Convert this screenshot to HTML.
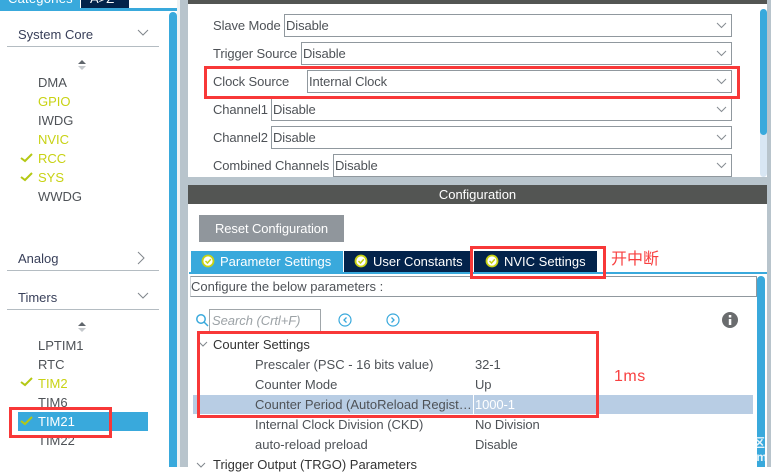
<!DOCTYPE html>
<html><head><meta charset="utf-8"><style>
html,body{margin:0;padding:0}
body{width:771px;height:467px;position:relative;overflow:hidden;background:#fff;font-family:"Liberation Sans","Noto Sans CJK SC",sans-serif;font-size:13px;color:#4e5257}
div{position:absolute;box-sizing:border-box}
.t{white-space:nowrap;line-height:16px;height:16px}
.g{color:#c8d214}
.sel{height:23px;border:1px solid #90989e;background:#fff;right:39px;padding-left:1px;line-height:21px;white-space:nowrap;letter-spacing:-.1px}
.lab{left:213px;letter-spacing:-.1px}
svg{position:absolute;overflow:visible}
.r{border:3px solid #f83838}
.p{left:255px}
.v{left:475px;letter-spacing:-.1px}
</style></head><body>
<!-- left -->
<div style="left:0;top:0;width:80px;height:8px;background:#39a9dc;overflow:hidden"><div class="t" style="left:8px;top:-9px;color:#fff;letter-spacing:.2px">Categories</div></div>
<div style="left:81px;top:0;width:48px;height:8px;background:#03234b;overflow:hidden"><div class="t" style="left:9px;top:-9px;color:#fff">A&gt;Z</div></div>
<div style="left:0;top:8px;width:179px;height:3px;background:#39a9dc"></div>
<div style="left:169px;top:12px;width:8px;height:455px;background:#39a9dc;border-radius:4px 4px 0 0"></div>
<div style="left:180px;top:0;width:8px;height:467px;background:#b8c4cc"></div>
<div style="left:177px;top:0;width:3px;height:467px;background:#f0f3f4"></div>
<div class="t" style="left:18px;top:27px;color:#39405a">System Core</div>
<div style="left:7px;top:46px;width:152px;height:1px;background:#b4bcc2"></div>
<svg style="left:137px;top:29px" width="14" height="9"><path d="M1 1L6 6L11 1" fill="none" stroke="#80868c"/></svg>
<svg style="left:78px;top:59px" width="9" height="12"><path d="M0 5L4 1L8 5Z" fill="#60666c"/><path d="M0 7H8L4 11Z" fill="#c4c8cc"/></svg>
<div class="t" style="left:38px;top:75px">DMA</div>
<div class="t g" style="left:38px;top:94px">GPIO</div>
<div class="t" style="left:38px;top:113px">IWDG</div>
<div class="t g" style="left:38px;top:132px">NVIC</div>
<div class="t g" style="left:38px;top:151px">RCC</div>
<div class="t g" style="left:38px;top:170px">SYS</div>
<div class="t" style="left:38px;top:189px">WWDG</div>
<svg style="left:20px;top:153px" width="13" height="10"><path d="M1 5L5 8L12 1" fill="none" stroke="#b4c814" stroke-width="2"/></svg>
<svg style="left:20px;top:172px" width="13" height="10"><path d="M1 5L5 8L12 1" fill="none" stroke="#b4c814" stroke-width="2"/></svg>
<div class="t" style="left:18px;top:251px;color:#39405a">Analog</div>
<svg style="left:137px;top:252px" width="9" height="13"><path d="M1 0L7 6L1 12" fill="none" stroke="#80868c"/></svg>
<div style="left:7px;top:270px;width:152px;height:1px;background:#b4bcc2"></div>
<div class="t" style="left:18px;top:290px;color:#39405a">Timers</div>
<svg style="left:137px;top:292px" width="14" height="9"><path d="M1 1L6 6L11 1" fill="none" stroke="#80868c"/></svg>
<div style="left:7px;top:309px;width:152px;height:1px;background:#b4bcc2"></div>
<svg style="left:78px;top:321px" width="9" height="12"><path d="M0 5L4 1L8 5Z" fill="#60666c"/><path d="M0 7H8L4 11Z" fill="#c4c8cc"/></svg>
<div class="t" style="left:38px;top:338px">LPTIM1</div>
<div class="t" style="left:38px;top:357px">RTC</div>
<div class="t g" style="left:38px;top:376px">TIM2</div>
<div class="t" style="left:38px;top:395px">TIM6</div>
<div class="t" style="left:38px;top:433px">TIM22</div>
<div style="left:18px;top:412px;width:130px;height:19px;background:#39a9dc"></div>
<div class="t" style="left:38px;top:414px;color:#fff">TIM21</div>
<svg style="left:20px;top:377px" width="13" height="10"><path d="M1 5L5 8L12 1" fill="none" stroke="#b4c814" stroke-width="2"/></svg>
<svg style="left:20px;top:416px" width="13" height="10"><path d="M1 5L5 8L12 1" fill="none" stroke="#b4c814" stroke-width="2"/></svg>
<div class="r" style="left:9px;top:407px;width:103px;height:31px"></div>
<!-- right top -->
<div style="left:188px;top:0;width:579px;height:4px;background:#535553"></div>
<div style="left:767px;top:0;width:4px;height:467px;background:#b8c4cc"></div>
<div style="left:188px;top:177px;width:579px;height:8px;background:#b8c4cc"></div>
<div style="left:760px;top:9px;width:7px;height:168px;background:#d8e6f3;border-radius:4px"></div>
<div style="left:760px;top:9px;width:7px;height:126px;background:#39a9dc;border-radius:4px"></div>
<div class="t lab" style="top:18px">Slave Mode</div><div class="sel" style="left:284px;top:14px">Disable</div>
<div class="t lab" style="top:46px">Trigger Source</div><div class="sel" style="left:301px;top:42px">Disable</div>
<div class="t lab" style="top:74px">Clock Source</div><div class="sel" style="left:307px;top:70px">Internal Clock</div>
<div class="t lab" style="top:102px">Channel1</div><div class="sel" style="left:271px;top:98px">Disable</div>
<div class="t lab" style="top:130px">Channel2</div><div class="sel" style="left:271px;top:126px">Disable</div>
<div class="t lab" style="top:158px">Combined Channels</div><div class="sel" style="left:333px;top:154px">Disable</div>
<svg style="left:716px;top:22px" width="12" height="8"><path d="M1 1L5.500 5.500L10 1" fill="none" stroke="#868c92"/></svg>
<svg style="left:716px;top:50px" width="12" height="8"><path d="M1 1L5.500 5.500L10 1" fill="none" stroke="#868c92"/></svg>
<svg style="left:716px;top:78px" width="12" height="8"><path d="M1 1L5.500 5.500L10 1" fill="none" stroke="#868c92"/></svg>
<svg style="left:716px;top:106px" width="12" height="8"><path d="M1 1L5.500 5.500L10 1" fill="none" stroke="#868c92"/></svg>
<svg style="left:716px;top:134px" width="12" height="8"><path d="M1 1L5.500 5.500L10 1" fill="none" stroke="#868c92"/></svg>
<svg style="left:716px;top:162px" width="12" height="8"><path d="M1 1L5.500 5.500L10 1" fill="none" stroke="#868c92"/></svg>
<div class="r" style="left:204px;top:66px;width:536px;height:33px"></div>
<!-- config -->
<div style="left:188px;top:185px;width:579px;height:19px;background:#535553;color:#fff;text-align:center;line-height:20px">Configuration</div>
<div style="left:199px;top:215px;width:145px;height:27px;background:#90969c;color:#fff;text-align:center;line-height:27px;letter-spacing:-.1px">Reset Configuration</div>
<div style="left:191px;top:251px;width:152px;height:21px;background:#39a9dc;color:#fff;line-height:21px;padding-left:29px">Parameter Settings</div>
<div style="left:344px;top:251px;width:126px;height:21px;background:#03234b;color:#fff;line-height:21px;padding-left:29px">User Constants</div>
<div style="left:474px;top:251px;width:123px;height:21px;background:#03234b;color:#fff;line-height:21px;padding-left:30px">NVIC Settings</div>
<svg style="left:201px;top:254px" width="14" height="14"><circle cx="7" cy="7" r="5.500" fill="#fff" stroke="#c8d214" stroke-width="1.800"/><path d="M4.500 7L6.500 9L9.800 5.300" fill="none" stroke="#c8d214" stroke-width="1.500"/></svg>
<svg style="left:354px;top:254px" width="14" height="14"><circle cx="7" cy="7" r="5.500" fill="#fff" stroke="#c8d214" stroke-width="1.800"/><path d="M4.500 7L6.500 9L9.800 5.300" fill="none" stroke="#c8d214" stroke-width="1.500"/></svg>
<svg style="left:485px;top:254px" width="14" height="14"><circle cx="7" cy="7" r="5.500" fill="#fff" stroke="#c8d214" stroke-width="1.800"/><path d="M4.500 7L6.500 9L9.800 5.300" fill="none" stroke="#c8d214" stroke-width="1.500"/></svg>
<div style="left:189px;top:272px;width:578px;height:2px;background:#39a9dc"></div>
<div style="left:190px;top:276px;width:567px;height:21px;border:1px solid #90989e;border-left-color:#d0d4d8;line-height:20px;padding-left:0">Configure the below parameters :</div>
<div class="r" style="left:470px;top:246px;width:136px;height:33px"></div>
<div class="t" style="left:611px;top:251px;font-size:16px;line-height:17px;height:17px;color:#f84040">开中断</div>
<div style="left:757px;top:276px;width:8px;height:191px;background:#39a9dc;border-radius:4px 4px 0 0"></div>
<svg style="left:195px;top:313px" width="14" height="15"><circle cx="6" cy="6" r="4.200" fill="none" stroke="#39a9dc" stroke-width="1.500"/><path d="M9 9L13 13" stroke="#39a9dc" stroke-width="1.500"/></svg>
<div style="left:209px;top:309px;width:112px;height:22px;border:1px solid #a0a6aa;border-bottom:0;line-height:22px;font-style:italic;color:#9ca2a6;padding-left:2px;letter-spacing:-.05px">Search (Crtl+F)</div>
<svg style="left:338px;top:313px" width="14" height="14"><circle cx="7" cy="7" r="6" fill="none" stroke="#39a9dc" stroke-width="1.200"/><path d="M8.500 4.500L6 7L8.500 9.500" fill="none" stroke="#39a9dc" stroke-width="1.300"/></svg>
<svg style="left:386px;top:313px" width="14" height="14"><circle cx="7" cy="7" r="6" fill="none" stroke="#39a9dc" stroke-width="1.200"/><path d="M5.500 4.500L8 7L5.500 9.500" fill="none" stroke="#39a9dc" stroke-width="1.300"/></svg>
<svg style="left:722px;top:312px" width="16" height="16"><circle cx="8" cy="8" r="8" fill="#6a6c6e"/><rect x="6.800" y="3" width="2.500" height="2.500" fill="#fff"/><rect x="6.800" y="7" width="2.500" height="6" fill="#fff"/></svg>
<!-- tree -->
<div style="left:193px;top:395px;width:560px;height:19px;background:#b8cde4"></div>
<div style="left:473px;top:395px;width:1px;height:19px;background:#fff"></div>
<svg style="left:199px;top:341px" width="10" height="8"><path d="M0 1L4 5L8 1" fill="none" stroke="#80868c"/></svg>
<div class="t" style="left:213px;top:337px;color:#333">Counter Settings</div>
<div class="t p" style="top:357px">Prescaler (PSC - 16 bits value)</div><div class="t v" style="top:357px">32-1</div>
<div class="t p" style="top:377px">Counter Mode</div><div class="t v" style="top:377px">Up</div>
<div class="t p" style="top:397px;width:217px;overflow:hidden">Counter Period (AutoReload Regist…</div><div class="t v" style="top:397px;color:#fff">1000-1</div>
<div class="t p" style="top:417px">Internal Clock Division (CKD)</div><div class="t v" style="top:417px">No Division</div>
<div class="t p" style="top:437px">auto-reload preload</div><div class="t v" style="top:437px">Disable</div>
<svg style="left:197px;top:462px" width="10" height="8"><path d="M0 1L4 5L8 1" fill="none" stroke="#80868c"/></svg>
<div class="t" style="left:213px;top:457px;color:#333">Trigger Output (TRGO) Parameters</div>
<div class="r" style="left:197px;top:331px;width:402px;height:87px"></div>
<div class="t" style="left:614px;top:368px;font-size:16px;line-height:18px;height:18px;color:#f84040;letter-spacing:.5px">1ms</div>
<div style="left:757px;top:436px;width:8px;height:31px;overflow:hidden"><div style="left:-4px;top:0;color:#e4f2fa;font-size:12px;line-height:14px;font-weight:bold;white-space:nowrap">区<br>&nbsp;m</div></div>
</body></html>
